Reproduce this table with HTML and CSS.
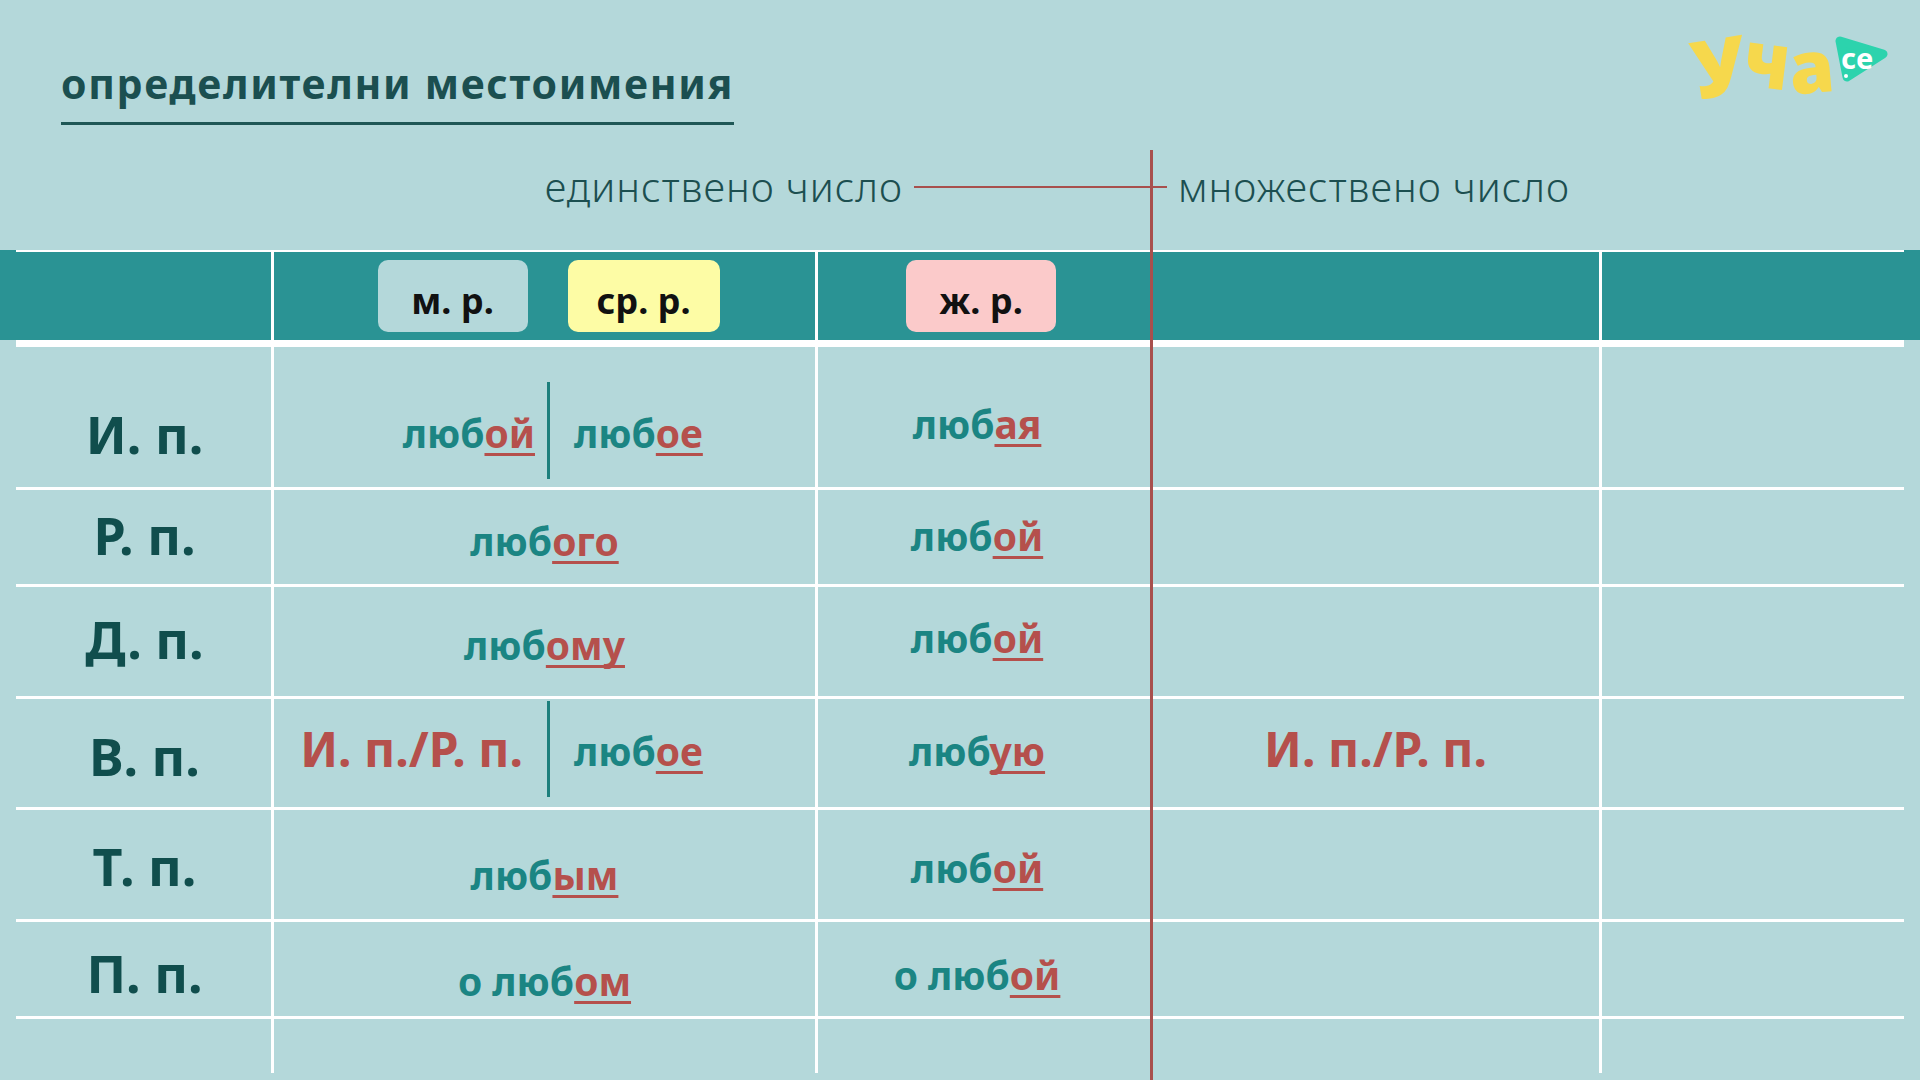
FILE: index.html
```html
<!DOCTYPE html>
<html lang="bg">
<head>
<meta charset="utf-8">
<title>определителни местоимения</title>
<link rel="stylesheet" href="styles.css">
</head>
<body>
<div class="page">
  <header class="top">
    <h1 class="title">определителни местоимения</h1>
    <div class="logo">
      <span class="lg"><span class="l1">У</span><span class="l2">ч</span><span class="l3">а</span></span>
      <svg class="play" viewBox="0 0 56 52" width="56" height="52">
        <polygon points="8,9 15,45 51,22" fill="#2cd3ad" stroke="#2cd3ad" stroke-width="9" stroke-linejoin="round"/>
        <text x="9" y="37" class="ce">ce</text>
        <circle cx="14" cy="44" r="2" fill="#ffffff"/>
      </svg>
    </div>
  </header>

  <div class="numbers">
    <div class="num-sg"><span>единствено число</span><i class="hline"></i></div>
    <div class="num-pl"><i class="hstub"></i><span>множествено число</span></div>
  </div>

  <div class="band">
    <div class="grid head">
      <div class="c c0"></div>
      <div class="c c1"><span class="pill m">м. р.</span><span class="pill n">ср. р.</span></div>
      <div class="c c2"><span class="pill f">ж. р.</span></div>
      <div class="c c3"></div>
      <div class="c c4"></div>
    </div>
  </div>

  <div class="grid body">
    <div class="row r1">
      <div class="c c0"><span class="lab">И. п.</span></div>
      <div class="c c1">
        <div class="split s1">
          <span class="w l">люб<span class="e">ой</span></span>
          <i class="div"></i>
          <span class="w r">люб<span class="e">ое</span></span>
        </div>
      </div>
      <div class="c c2 up"><span class="w">люб<span class="e">ая</span></span></div>
      <div class="c c3"></div>
      <div class="c c4"></div>
    </div>
    <div class="row r2">
      <div class="c c0"><span class="lab">Р. п.</span></div>
      <div class="c c1"><span class="w">люб<span class="e">ого</span></span></div>
      <div class="c c2 up"><span class="w">люб<span class="e">ой</span></span></div>
      <div class="c c3"></div>
      <div class="c c4"></div>
    </div>
    <div class="row r3">
      <div class="c c0"><span class="lab">Д. п.</span></div>
      <div class="c c1"><span class="w">люб<span class="e">ому</span></span></div>
      <div class="c c2 up"><span class="w">люб<span class="e">ой</span></span></div>
      <div class="c c3"></div>
      <div class="c c4"></div>
    </div>
    <div class="row r4">
      <div class="c c0"><span class="lab">В. п.</span></div>
      <div class="c c1">
        <div class="split s4">
          <span class="w red l">И. п./Р. п.</span>
          <i class="div"></i>
          <span class="w r">люб<span class="e">ое</span></span>
        </div>
      </div>
      <div class="c c2"><span class="w">люб<span class="e">ую</span></span></div>
      <div class="c c3"><span class="w red">И. п./Р. п.</span></div>
      <div class="c c4"></div>
    </div>
    <div class="row r5">
      <div class="c c0"><span class="lab">Т. п.</span></div>
      <div class="c c1"><span class="w">люб<span class="e">ым</span></span></div>
      <div class="c c2 up"><span class="w">люб<span class="e">ой</span></span></div>
      <div class="c c3"></div>
      <div class="c c4"></div>
    </div>
    <div class="row r6">
      <div class="c c0"><span class="lab">П. п.</span></div>
      <div class="c c1"><span class="w">о люб<span class="e">ом</span></span></div>
      <div class="c c2 up"><span class="w">о люб<span class="e">ой</span></span></div>
      <div class="c c3"></div>
      <div class="c c4"></div>
    </div>
    <div class="row r7">
      <div class="c c0"></div>
      <div class="c c1"></div>
      <div class="c c2"></div>
      <div class="c c3"></div>
      <div class="c c4"></div>
    </div>
  </div>

  <div class="redline"></div>
</div>
</body>
</html>
```

FILE: styles.css
```css
* { box-sizing: border-box; }

html, body {
  margin: 0;
  padding: 0;
  background: #b4d8da;
}

body {
  font-family: "Noto Sans", "Open Sans", sans-serif;
}

.page {
  position: relative;
  width: 1920px;
  height: 1080px;
  overflow: hidden;
  background: #b4d8da;
}

/* ---------- header ---------- */
.top {
  height: 150px;
  display: flex;
  justify-content: space-between;
  align-items: flex-start;
  padding: 0 32px 0 61px;
}

.title {
  margin: 63px 0 0 0;
  font-size: 41px;
  line-height: 41px;
  font-weight: 700;
  letter-spacing: 1.7px;
  color: #1b4f50;
  padding-bottom: 18px;
  border-bottom: 3px solid #1f5756;
}

.logo {
  margin-top: 30px;
  display: flex;
  align-items: flex-start;
  height: 72px;
}

.lg {
  display: flex;
  align-items: flex-end;
  color: #f6d84c;
  font-weight: 900;
  height: 70px;
}

.lg span { display: block; line-height: 1; }

.l1 {
  font-size: 80px;
  transform: rotate(-9deg) translateY(5px);
  margin-right: -4px;
}

.l2 {
  font-size: 78px;
  transform: rotate(7deg) translateY(-3px) scaleX(0.9);
  margin-right: -3px;
}

.l3 {
  font-size: 72px;
  transform: rotate(-5deg) translateY(1px);
  margin-right: -2px;
}

.play {
  display: block;
  margin-top: 2px;
}

.ce {
  font-family: "Noto Sans", sans-serif;
  font-weight: 700;
  font-size: 29px;
  fill: #ffffff;
}

/* ---------- number labels ---------- */
.numbers {
  height: 100px;
  margin: 0 16px;
  display: grid;
  grid-template-columns: 258px 544px 334px 450px 1fr;
}

.num-sg, .num-pl {
  margin-top: 17px;
  height: 40px;
  display: flex;
  align-items: center;
  font-size: 40px;
  line-height: 40px;
  font-weight: 300;
  letter-spacing: 1px;
  color: #1c4f50;
}

.num-sg {
  grid-column: 1 / 4;
  justify-content: flex-end;
}

.num-pl {
  grid-column: 4 / 6;
}

.hline {
  display: block;
  width: 238px;
  height: 2px;
  margin-left: 11px;
  background: #a8504d;
}

.hstub {
  display: block;
  width: 15px;
  height: 2px;
  margin-right: 11px;
  background: #a8504d;
}

/* ---------- table ---------- */
.band {
  background: #2a9394;
  height: 90px;
}

.grid {
  margin: 0 16px;
  display: grid;
  grid-template-columns: 258px 544px 334px 450px 1fr;
}

.head {
  height: 90px;
  border-top: 2px solid #ffffff;
}

.head .c {
  display: flex;
  justify-content: center;
  align-items: center;
  gap: 40px;
}

.head .c1 { padding-left: 8px; }

.c0, .c1, .c3 { border-right: 3px solid #ffffff; }

.pill {
  width: 150px;
  height: 72px;
  border-radius: 10px;
  display: flex;
  justify-content: center;
  align-items: center;
  padding-top: 8px;
  font-size: 36px;
  font-weight: 700;
  color: #111111;
}

.pill.m { background: #b4d8da; }
.pill.n { background: #fdfca5; width: 152px; }
.pill.f { background: #fbcaca; margin-left: -8px; }

.body {
  height: 733px;
  border-top: 7px solid #ffffff;
  grid-template-rows: 143px 97px 112px 111px 112px 97px 1fr;
}

.row { display: contents; }

.body .c {
  display: flex;
  justify-content: center;
  align-items: flex-start;
}

.body .c2 { padding-right: 16px; }

.row:not(.r7) .c { border-bottom: 3px solid #ffffff; }

.r1 .c { padding-top: 66px; }
.r2 .c { padding-top: 31px; }
.r3 .c { padding-top: 38px; }
.r4 .c { padding-top: 32px; }
.r5 .c { padding-top: 45px; }
.r6 .c { padding-top: 39px; }

.r1 .c.up { padding-top: 57px; }
.r2 .c.up { padding-top: 26px; }
.r3 .c.up { padding-top: 31px; }
.r5 .c.up { padding-top: 38px; }
.r6 .c.up { padding-top: 33px; }
.r1 .c0 { padding-top: 72px; }
.r2 .c0 { padding-top: 30px; }
.r3 .c0 { padding-top: 37px; }
.r4 .c0 { padding-top: 42px; }
.r5 .c0 { padding-top: 41px; }
.r6 .c0 { padding-top: 36px; }

.lab {
  font-size: 52px;
  line-height: 30px;
  font-weight: 700;
  color: #104e4d;
  margin-left: 2px;
}

.w {
  font-size: 39px;
  line-height: 40px;
  font-weight: 700;
  color: #1b8583;
  white-space: nowrap;
}

.w.red {
  color: #b5504c;
  font-size: 48px;
  line-height: 36px;
}

.e {
  color: #b5504c;
  text-decoration: underline;
  text-decoration-color: #b5504c;
  text-decoration-thickness: 3px;
  text-underline-offset: 5px;
  text-decoration-skip-ink: none;
}

.split {
  width: 100%;
  display: grid;
  grid-template-columns: 1fr auto 1fr;
  align-items: start;
  padding-left: 8px;
}

.split .l { justify-self: end; }
.split .r { justify-self: start; padding-left: 24px; }
.s1 .l { padding-right: 12px; }
.s4 .l { padding-right: 24px; }

.div {
  display: block;
  width: 3px;
  background: #1d7f7c;
}

.s1 .div { height: 97px; margin-top: -31px; }
.s4 .div { height: 96px; margin-top: -30px; }

/* long red divider between singular and plural */
.redline {
  position: absolute;
  left: 1150px;
  top: 150px;
  bottom: 0;
  width: 3px;
  background: #a8504d;
}
```
